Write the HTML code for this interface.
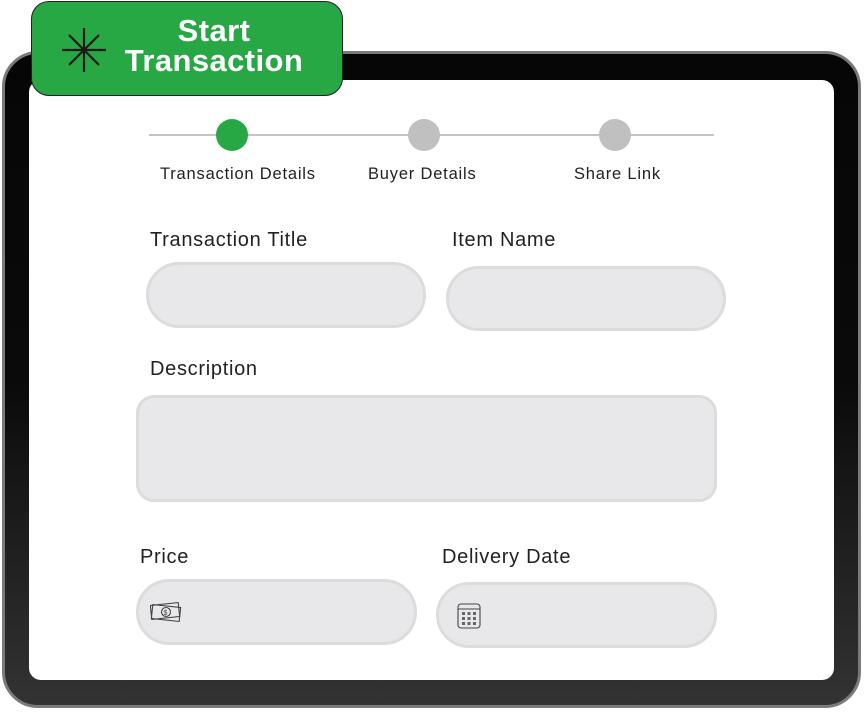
<!DOCTYPE html>
<html><head><style>
body{margin:0;width:864px;height:713px;background:#fff;position:relative;overflow:hidden;font-family:"Liberation Sans",sans-serif;}
.frame{position:absolute;left:2px;top:51px;width:853px;height:651px;border-radius:36px;background:linear-gradient(#060606 0%,#0a0a0a 50%,#333 100%);border:3px solid #7a7a7a;}
.screen{position:absolute;left:29px;top:80px;width:805px;height:600px;border-radius:12px;background:#fff;}
.btn{position:absolute;left:31px;top:1px;width:312px;height:95px;border-radius:18px;background:#28a745;border:1.5px solid #222;box-sizing:border-box;}
.btn .t{position:absolute;left:82px;top:14px;color:#fff;font-weight:bold;font-size:31px;line-height:30px;text-align:center;width:200px;letter-spacing:0.4px;}
.line{position:absolute;top:134px;left:149px;width:565px;height:2px;background:#c4c4c4;}
.dot{position:absolute;width:32px;height:32px;border-radius:50%;top:119px;background:#c0c0c0;}
.step{position:absolute;top:165px;font-size:16.5px;color:#222;letter-spacing:0.8px;}
.lbl{position:absolute;font-size:20px;color:#222;letter-spacing:0.7px;}
.in{position:absolute;background:#e8e8ea;border:3px solid #dcdcdc;box-sizing:border-box;}
</style></head><body>
<div class="frame"></div>
<div class="screen"></div>
<div class="btn">
<svg style="position:absolute;left:30px;top:26px" width="44" height="44" viewBox="0 0 44 44" stroke="#1a1a1a" stroke-width="2.2"><line x1="0" y1="22" x2="44" y2="22"/><line x1="22" y1="0" x2="22" y2="44"/><line x1="7" y1="7" x2="37" y2="37"/><line x1="37" y1="7" x2="7" y2="37"/></svg>
<div class="t">Start<br>Transaction</div></div>
<div class="line"></div>
<div class="dot" style="left:216px;background:#28a745"></div>
<div class="dot" style="left:408px"></div>
<div class="dot" style="left:599px"></div>
<div class="step" style="left:160px">Transaction Details</div>
<div class="step" style="left:368px">Buyer Details</div>
<div class="step" style="left:574px">Share Link</div>
<div class="lbl" style="left:150px;top:229px">Transaction Title</div>
<div class="lbl" style="left:452px;top:229px">Item Name</div>
<div class="in" style="left:146px;top:262px;width:280px;height:66px;border-radius:33px"></div>
<div class="in" style="left:446px;top:266px;width:280px;height:65px;border-radius:33px"></div>
<div class="lbl" style="left:150px;top:358px">Description</div>
<div class="in" style="left:136px;top:395px;width:581px;height:107px;border-radius:18px"></div>
<div class="lbl" style="left:140px;top:546px">Price</div>
<div class="lbl" style="left:442px;top:546px">Delivery Date</div>
<div class="in" style="left:136px;top:579px;width:281px;height:66px;border-radius:33px"></div>
<div class="in" style="left:436px;top:582px;width:281px;height:66px;border-radius:33px"></div>
<svg style="position:absolute;left:150px;top:601px" width="32" height="22" viewBox="0 0 32 22" fill="none" stroke="#444" stroke-width="1.1"><rect x="1" y="3" width="28" height="14" transform="rotate(-6 15 10)"/><rect x="2" y="5" width="28" height="14" transform="rotate(6 16 12)"/><circle cx="16" cy="11" r="4.5"/><text x="13.5" y="14" font-size="7" fill="#444" stroke="none">$</text></svg>
<svg style="position:absolute;left:457px;top:601px" width="24" height="28" viewBox="0 0 24 28" fill="none" stroke="#444" stroke-width="1.1"><rect x="1" y="3" width="22" height="24" rx="3"/><line x1="1" y1="8" x2="23" y2="8"/><g fill="#666" stroke="none"><rect x="5" y="11" width="3" height="3"/><rect x="10.5" y="11" width="3" height="3"/><rect x="16" y="11" width="3" height="3"/><rect x="5" y="16" width="3" height="3"/><rect x="10.5" y="16" width="3" height="3"/><rect x="16" y="16" width="3" height="3"/><rect x="5" y="21" width="3" height="3"/><rect x="10.5" y="21" width="3" height="3"/><rect x="16" y="21" width="3" height="3"/></g></svg>
</body></html>
